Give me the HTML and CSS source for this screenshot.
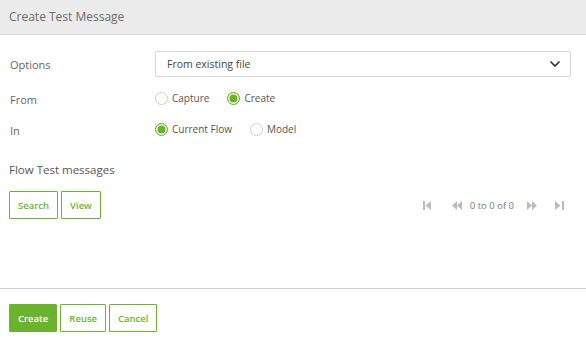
FILE: index.html
```html
<!DOCTYPE html>
<html lang="en">
<head>
    <meta charset="UTF-8">
    <title>Create Test Message</title>
    <link rel="stylesheet" href="styles.css">
</head>
<body>
    <div class="dialog">
        <div class="dialog-header">Create Test Message</div>

        <div class="dialog-body">
            <div class="form-row">
                <label class="form-label">Options</label>
                <div class="select-box">
                    <span>From existing file</span>
                    <svg class="chevron" width="12" height="8" viewBox="0 0 12 8"><path d="M1.5 1.5 L6 6 L10.5 1.5" fill="none" stroke="#333" stroke-width="1.6"/></svg>
                </div>
            </div>

            <div class="form-row radio-row">
                <label class="form-label">From</label>
                <div class="radio-group">
                    <span class="radio"><span class="radio-dot"></span>Capture</span>
                    <span class="radio checked"><span class="radio-dot"></span>Create</span>
                </div>
            </div>

            <div class="form-row radio-row">
                <label class="form-label">In</label>
                <div class="radio-group">
                    <span class="radio checked"><span class="radio-dot"></span>Current Flow</span>
                    <span class="radio"><span class="radio-dot"></span>Model</span>
                </div>
            </div>

            <h3 class="section-title">Flow Test messages</h3>

            <div class="toolbar">
                <div class="btn-group">
                    <button class="btn">Search</button>
                    <button class="btn">View</button>
                </div>
                <div class="pager">
                    <svg class="pager-icon first" width="9" height="9" viewBox="0 0 9 9"><rect x="0" y="0" width="2" height="9" fill="#bbb"/><path d="M8 0 L2.5 4.5 L8 9 Z" fill="#bbb"/></svg>
                    <svg class="pager-icon prev" width="10" height="9" viewBox="0 0 10 9"><path d="M5 0 L0 4.5 L5 9 Z M10 0 L5 4.5 L10 9 Z" fill="#bbb"/></svg>
                    <span class="pager-text">0 to 0 of 0</span>
                    <svg class="pager-icon next" width="10" height="9" viewBox="0 0 10 9"><path d="M0 0 L5 4.5 L0 9 Z M5 0 L10 4.5 L5 9 Z" fill="#bbb"/></svg>
                    <svg class="pager-icon last" width="9" height="9" viewBox="0 0 9 9"><path d="M0 0 L5.5 4.5 L0 9 Z" fill="#bbb"/><rect x="7" y="0" width="2" height="9" fill="#bbb"/></svg>
                </div>
            </div>
        </div>

        <div class="dialog-footer">
            <button class="btn btn-primary">Create</button>
            <button class="btn">Reuse</button>
            <button class="btn">Cancel</button>
        </div>
    </div>
</body>
</html>
```

FILE: styles.css
```css
* {
    margin: 0;
    padding: 0;
    box-sizing: border-box;
}
body {
    font-family: 'Open Sans', sans-serif;
    color: #555;
    background-color: #fff;
    width: 586px;
    height: 345px;
    overflow: hidden;
}
.dialog {
    display: flex;
    flex-direction: column;
    height: 345px;
}
.dialog-header {
    height: 35px;
    background-color: #ebebeb;
    border-bottom: 1px solid #d6d6d6;
    padding: 0 9px;
    font-size: 12px;
    line-height: 33px;
    color: #6b6b6b;
}
.dialog-body {
    height: 253px;
    padding: 16px 15px 0 10px;
}
.form-row {
    display: flex;
    align-items: center;
    height: 26px;
}
.radio-row {
    margin-top: 11px;
    height: 20px;
}
.radio-row + .radio-row {
    margin-top: 11px;
}
.form-label {
    width: 145px;
    font-size: 11px;
    color: #666;
}
.radio-row .form-label {
    position: relative;
    top: 1px;
}
.select-box {
    flex: 1;
    height: 26px;
    border: 1px solid #d5d5d5;
    border-radius: 2px;
    display: flex;
    align-items: center;
    justify-content: space-between;
    padding: 0 9px 0 11px;
    font-size: 10.5px;
    color: #444;
}
.chevron {
    display: block;
}
.radio-group {
    display: flex;
    gap: 18px;
}
.radio {
    display: flex;
    align-items: center;
    gap: 4px;
    font-size: 10px;
    color: #555;
}
.radio-dot {
    width: 13px;
    height: 13px;
    border: 1px solid #ccc;
    border-radius: 50%;
    background: #fff;
}
.radio.checked .radio-dot {
    border-color: #6ab42d;
    background: #6ab42d;
    box-shadow: inset 0 0 0 1.5px #fff;
}
.section-title {
    font-weight: normal;
    font-size: 11.5px;
    color: #555;
    margin-top: 23px;
    margin-left: -1px;
}
.toolbar {
    display: flex;
    justify-content: space-between;
    align-items: center;
    margin-top: 14px;
    margin-left: -1px;
}
.btn-group {
    display: flex;
    gap: 3px;
}
.btn {
    font-family: 'Open Sans', sans-serif;
    height: 28px;
    padding: 0 8px;
    border: 1px solid #6ab42d;
    border-radius: 1px;
    background: #fff;
    color: #6ab42d;
    font-size: 9.5px;
    font-weight: 600;
}
.pager {
    display: flex;
    align-items: center;
    margin-right: 7px;
}
.pager-icon {
    display: block;
}
.pager-icon.first {
    margin-right: 20px;
}
.pager-icon.prev {
    margin-right: 8px;
}
.pager-text {
    font-size: 9.5px;
    color: #777;
    margin-right: 13px;
}
.pager-icon.next {
    margin-right: 18px;
}
.dialog-footer {
    border-top: 1px solid #cfcfcf;
    padding: 15px 9px 0;
    display: flex;
    gap: 3px;
}
.btn-primary {
    background: #6ab42d;
    color: #fff;
}
```
